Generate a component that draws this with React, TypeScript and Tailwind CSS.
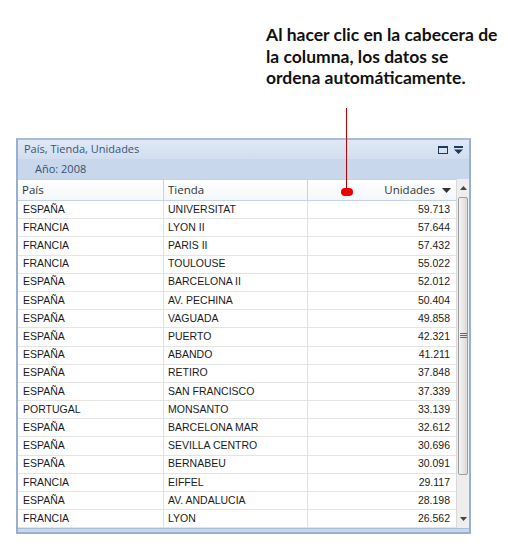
import React from 'react';

const ROWS: [string, string, string][] = [
  ['ESPAÑA', 'UNIVERSITAT', '59.713'],
  ['FRANCIA', 'LYON II', '57.644'],
  ['FRANCIA', 'PARIS II', '57.432'],
  ['FRANCIA', 'TOULOUSE', '55.022'],
  ['ESPAÑA', 'BARCELONA II', '52.012'],
  ['ESPAÑA', 'AV. PECHINA', '50.404'],
  ['ESPAÑA', 'VAGUADA', '49.858'],
  ['ESPAÑA', 'PUERTO', '42.321'],
  ['ESPAÑA', 'ABANDO', '41.211'],
  ['ESPAÑA', 'RETIRO', '37.848'],
  ['ESPAÑA', 'SAN FRANCISCO', '37.339'],
  ['PORTUGAL', 'MONSANTO', '33.139'],
  ['ESPAÑA', 'BARCELONA MAR', '32.612'],
  ['ESPAÑA', 'SEVILLA CENTRO', '30.696'],
  ['ESPAÑA', 'BERNABEU', '30.091'],
  ['FRANCIA', 'EIFFEL', '29.117'],
  ['ESPAÑA', 'AV. ANDALUCIA', '28.198'],
  ['FRANCIA', 'LYON', '26.562'],
];

const uiFont = "font-['Open_Sans',sans-serif]";
const gridFont = "font-['Liberation_Sans',Arial,sans-serif]";

const Scrollbar = () => (
  <div className="w-[13px] flex flex-col bg-[#eeeeee] border-l border-[#d9d9d9]">
    <div className="h-[18px] flex items-center justify-center">
      <svg width="7" height="4" viewBox="0 0 7 4"><path d="M0 4 L3.5 0 L7 4 Z" fill="#444" /></svg>
    </div>
    <div className="mx-[1px] h-[278px] rounded-[2px] border border-[#9e9e9e] bg-gradient-to-r from-[#f6f6f6] to-[#dadada] flex items-center justify-center">
      <svg width="7" height="6" viewBox="0 0 7 6">
        <path d="M0 0.5 H7 M0 2.5 H7 M0 4.5 H7" stroke="#666" strokeWidth="1" />
      </svg>
    </div>
    <div className="flex-1" />
    <div className="h-[18px] flex items-center justify-center">
      <svg width="7" height="4" viewBox="0 0 7 4"><path d="M0 0 L7 0 L3.5 4 Z" fill="#444" /></svg>
    </div>
  </div>
);

export default function App() {
  return (
    <div className="relative w-[508px] h-[549px] bg-white overflow-hidden">
      {/* Annotation */}
      <div className="pl-[266px] pt-[24px] h-[138px]">
        <p className="font-['Lato',sans-serif] font-bold text-[17.5px] leading-[21.5px] text-[#111]">
          Al hacer clic en la cabecera de
          <br />
          la columna, los datos se
          <br />
          ordena automáticamente.
        </p>
      </div>

      {/* Panel */}
      <div className="ml-[16px] w-[455px] border-2 border-[#98afd0] border-t-[#a9bcd8]">
        <div className={`h-[19px] bg-gradient-to-b from-[#dfe9f6] to-[#d2def0] flex items-center px-[6px] ${uiFont}`}>
          <span className="text-[11px] text-[#3a5478] flex-1">País, Tienda, Unidades</span>
          <svg width="10" height="8" viewBox="0 0 10 8" className="mr-[6px]">
            <rect x="0.5" y="0.5" width="9" height="7" fill="none" stroke="#1e3a5f" />
            <rect x="0" y="0" width="10" height="2" fill="#1e3a5f" />
          </svg>
          <svg width="9" height="8" viewBox="0 0 9 8">
            <rect x="0" y="0" width="9" height="2" fill="#1e3a5f" />
            <path d="M0 3.5 H9 L4.5 8 Z" fill="#1e3a5f" />
          </svg>
        </div>
        <div className={`h-[20px] bg-[#c8d7ec] flex items-center pl-[17px] ${uiFont}`}>
          <span className="text-[11px] text-[#3a4f6e]">Año: 2008</span>
        </div>

        <div className="flex">
          <div className="flex-1 flex flex-col">
            <div className={`h-[22px] flex bg-gradient-to-b from-white to-[#f4f7fb] border-y border-[#c4d2e5] text-[11.5px] text-[#333] ${uiFont}`}>
              <div className="w-[146px] border-r border-[#c4d2e5] flex items-center pl-[4px]">País</div>
              <div className="w-[144px] border-r border-[#c4d2e5] flex items-center pl-[4px]">Tienda</div>
              <div className="flex-1 flex items-center justify-end pr-[5px] gap-[7px]">
                <span>Unidades</span>
                <svg width="9" height="5" viewBox="0 0 9 5"><path d="M0 0 H9 L4.5 5 Z" fill="#333" /></svg>
              </div>
            </div>
            <div className={`${gridFont} text-[10.5px] text-[#1a1a1a]`}>
              {ROWS.map(([pais, tienda, uds], i) => (
                <div key={i} className="h-[18.2px] flex border-b border-[#e4e4e4]">
                  <div className="w-[146px] border-r border-[#e0e0e0] flex items-center pl-[5px]">{pais}</div>
                  <div className="w-[144px] border-r border-[#e0e0e0] flex items-center pl-[4px]">{tienda}</div>
                  <div className="flex-1 flex items-center justify-end pr-[6px]">{uds}</div>
                </div>
              ))}
            </div>
          </div>
          <Scrollbar />
        </div>
        <div className="h-[4px] bg-[#c8d7ec] border-t border-[#a9bcd8]" />
      </div>

      {/* Red pointer over the header */}
      <div className="absolute left-[346px] top-[108px] w-[1px] h-[82px] bg-[#c00000]" />
      <div className="absolute left-[341px] top-[188px] w-[12px] h-[8px] rounded-full bg-[#ee0000]" />
    </div>
  );
}
